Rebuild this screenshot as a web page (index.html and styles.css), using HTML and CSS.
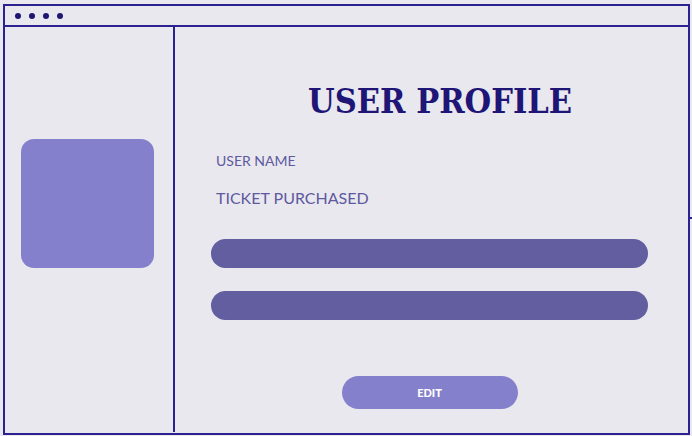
FILE: index.html
```html
<!DOCTYPE html>
<html>
<head>
<meta charset="utf-8">
<link rel="stylesheet" href="styles.css">
</head>
<body>
<div class="frame">
  <div class="topbar">
    <span class="dot"></span><span class="dot"></span><span class="dot"></span><span class="dot"></span>
  </div>
  <div class="body">
    <aside class="sidebar">
      <div class="avatar"></div>
    </aside>
    <main class="main">
      <h1 class="title">USER PROFILE</h1>
      <div class="label small">USER NAME</div>
      <div class="label big">TICKET PURCHASED</div>
      <div class="bar bar-first"></div>
      <div class="bar bar-second"></div>
      <div class="actions"><button class="edit">EDIT</button></div>
    </main>
  </div>
  <span class="tick"></span>
</div>
</body>
</html>
```
FILE: styles.css
```css
html, body {
  margin: 0;
  padding: 0;
  background: #e9e8ee;
}
.frame {
  position: relative;
  margin: 4px 0 0 3px;
  width: 687px;
  height: 431px;
  box-sizing: border-box;
  border: 2px solid #2b2190;
  display: flex;
  flex-direction: column;
}
.topbar {
  height: 19px;
  border-bottom: 2px solid #2b2190;
  display: flex;
  align-items: center;
  gap: 8px;
  padding-left: 10px;
}
.dot {
  width: 6px;
  height: 6px;
  border-radius: 50%;
  background: #1f1672;
}
.body {
  flex: 1;
  display: flex;
}
.sidebar {
  width: 170px;
  border-right: 2px solid #2b2190;
  margin-bottom: 1px;
  padding: 112px 0 0 16px;
  box-sizing: border-box;
}
.avatar {
  width: 133px;
  height: 129px;
  border-radius: 13px;
  background: #8480cc;
}
.main {
  flex: 1;
  padding: 0 40px 0 36px;
  display: flex;
  flex-direction: column;
}
.title {
  margin: 56px 0 0 97px;
  font-family: "DejaVu Serif", serif;
  font-stretch: condensed;
  font-weight: bold;
  font-size: 34px;
  line-height: 37px;
  color: #1e1577;
}
.label {
  font-family: "Lato", "Open Sans", sans-serif;
  color: #5e59a0;
  padding-left: 5px;
}
.small {
  margin-top: 32px;
  font-size: 14px;
  line-height: 18px;
}
.big {
  margin-top: 18px;
  font-size: 16px;
  line-height: 20px;
}
.bar {
  height: 29px;
  border-radius: 15px;
  background: #625ea0;
}
.bar-first {
  margin-top: 31px;
}
.bar-second {
  margin-top: 23px;
}
.actions {
  display: flex;
  justify-content: center;
  margin-top: 56px;
}
.edit {
  width: 176px;
  height: 33px;
  border: none;
  border-radius: 17px;
  background: #8480cc;
  color: #ffffff;
  font-family: "Lato", sans-serif;
  font-weight: 900;
  font-size: 11px;
  padding: 0;
}
.tick {
  position: absolute;
  right: -4px;
  top: 211px;
  width: 2px;
  height: 2px;
  background: #2b2190;
}
```
